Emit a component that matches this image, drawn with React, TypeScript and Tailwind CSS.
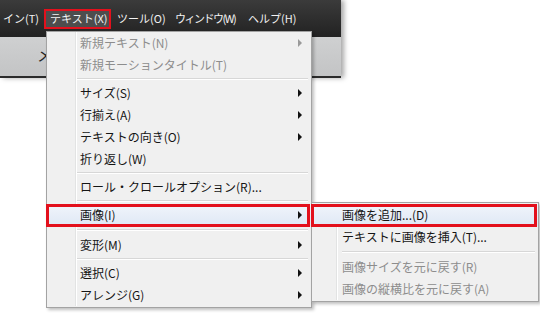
import React from "react";

type Item =
  | { sep: true; h?: string }
  | { label: string; disabled?: boolean; arrow?: boolean; hl?: boolean };

const mainItems: Item[] = [
  { label: "新規テキスト(N)", disabled: true, arrow: true },
  { label: "新規モーションタイトル(T)", disabled: true },
  { sep: true },
  { label: "サイズ(S)", arrow: true },
  { label: "行揃え(A)", arrow: true },
  { label: "テキストの向き(O)", arrow: true },
  { label: "折り返し(W)" },
  { sep: true },
  { label: "ロール・クロールオプション(R)..." },
  { sep: true },
  { label: "画像(I)", arrow: true, hl: true },
  { sep: true, h: "h-[8px]" },
  { label: "変形(M)", arrow: true },
  { sep: true },
  { label: "選択(C)", arrow: true },
  { label: "アレンジ(G)", arrow: true },
];

const subItems: Item[] = [
  { label: "画像を追加...(D)", hl: true },
  { label: "テキストに画像を挿入(T)..." },
  { sep: true, h: "h-[8px]" },
  { label: "画像サイズを元に戻す(R)", disabled: true },
  { label: "画像の縦横比を元に戻す(A)", disabled: true },
];

function Arrow({ disabled }: { disabled?: boolean }) {
  return (
    <span
      className={`ml-auto h-0 w-0 border-y-[4px] border-l-[4px] border-y-transparent ${
        disabled ? "border-l-[#9a9a9a]" : "border-l-[#111]"
      }`}
    />
  );
}

function Menu({ items, pl, gutter }: { items: Item[]; pl: string; gutter: string }) {
  return (
    <div className="relative">
      {/* gutter line */}
      <div className={`absolute top-0 bottom-0 ${gutter} w-[2px] border-l border-[#e2e3e3] border-r border-r-white`} />
      {items.map((it, i) => {
        if ("sep" in it) {
          return (
            <div key={i} className={`flex items-center ${it.h ?? "h-[6px]"} pl-[30px] pr-[3px]`}>
              <div className="h-[2px] w-full border-t border-[#d7d7d7] border-b border-b-white" />
            </div>
          );
        }
        return (
          <div
            key={i}
            className={`relative flex h-[22px] items-center ${pl} pr-[9px] ${
              it.hl ? "bg-gradient-to-b from-[#f1f5fb] to-[#dfe8f5]" : ""
            } ${it.disabled ? "text-[#8d8d8d]" : "text-[#151515]"}`}
          >
            <span className="relative whitespace-nowrap">{it.label}</span>
            {it.arrow && <Arrow disabled={it.disabled} />}
            {it.hl && (
              <div className="absolute -left-px right-px top-0 -bottom-px border-[3px] border-[#e3101c]" />
            )}
          </div>
        );
      })}
    </div>
  );
}

export default function App() {
  return (
    <div className="relative h-[313px] w-[540px] overflow-hidden bg-white font-['Noto_Sans_CJK_JP','Noto_Sans',sans-serif]">
      {/* window chrome behind the menu */}
      <div className="w-[341px] shadow-[3px_0_5px_rgba(0,0,0,0.35)]">
        <div className="flex h-[37px] items-center whitespace-nowrap bg-gradient-to-b from-[#3b3b3b] to-[#222222] text-[11px] leading-none text-[#f2f2f2]">
          <span className="w-[44px] shrink-0 pl-[3px]">イン(T)</span>
          <span className="flex h-[20px] w-[67px] shrink-0 items-center border-2 border-[#e3101c] bg-[#4d4d4d] pl-[4px]">
            テキスト(X)
          </span>
          <span className="w-[60px] shrink-0 pl-[6px]">ツール(O)</span>
          <span className="w-[73px] shrink-0 pl-[4px] tracking-[-1.5px]">ウィンドウ(W)</span>
          <span className="shrink-0 pl-[4px]">ヘルプ(H)</span>
        </div>
        <div className="h-[41px] border-b-2 border-[#2b2b2b] bg-gradient-to-b from-[#cfd0d1] to-[#c3c4c5] pl-[37px] pt-[9px] text-[16px] leading-none text-[#222]">
          メ
        </div>
      </div>

      {/* main dropdown */}
      <div className="absolute left-[46px] top-[31px] w-[266px] border border-[#a3a3a3] bg-[#f0f0f0] pb-px text-[12px] shadow-[2px_2px_3px_rgba(0,0,0,0.25)]">
        <Menu items={mainItems} pl="pl-[33px]" gutter="left-[28px]" />
      </div>

      {/* submenu */}
      <div className="absolute left-[311px] top-[202px] w-[228px] border border-[#a3a3a3] bg-[#f0f0f0] py-px text-[12px] shadow-[2px_2px_3px_rgba(0,0,0,0.25)]">
        <Menu items={subItems} pl="pl-[30px]" gutter="left-[24px]" />
      </div>
    </div>
  );
}
